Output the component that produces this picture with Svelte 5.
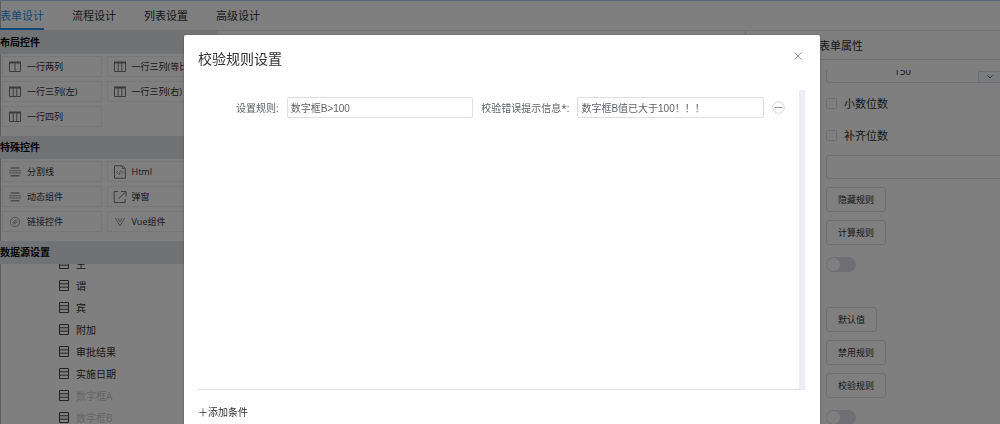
<script lang="ts">
	type Control = { icon: string; label: string };

	const tabs = ['表单设计', '流程设计', '列表设置', '高级设计'];
	let activeTab = $state('表单设计');

	// Левая панель с контролами
	const groups: { title: string; items: Control[] }[] = [
		{
			title: '布局控件',
			items: [
				{ icon: 'col2', label: '一行两列' },
				{ icon: 'col3', label: '一行三列(等比)' },
				{ icon: 'col3', label: '一行三列(左)' },
				{ icon: 'col3', label: '一行三列(右)' },
				{ icon: 'col3', label: '一行四列' }
			]
		},
		{
			title: '特殊控件',
			items: [
				{ icon: 'line', label: '分割线' },
				{ icon: 'html', label: 'Html' },
				{ icon: 'line', label: '动态组件' },
				{ icon: 'popup', label: '弹窗' },
				{ icon: 'link', label: '链接控件' },
				{ icon: 'vue', label: 'Vue组件' }
			]
		}
	];

	const fields = [
		{ name: '主' },
		{ name: '谓' },
		{ name: '宾' },
		{ name: '附加' },
		{ name: '审批结果' },
		{ name: '实施日期' },
		{ name: '数字框A', used: true },
		{ name: '数字框B', used: true }
	];

	let width = $state('150');
	let extra = $state('');
	let isOpen = $state(true);
	let rules = $state([{ rule: '数字框B>100', message: '数字框B值已大于100！！！' }]);

	function addRule() {
		rules.push({ rule: '', message: '' });
	}

	function removeRule(index: number) {
		rules.splice(index, 1);
	}
</script>

{#snippet icon(name: string)}
	<svg class="icon" viewBox="0 0 14 14" fill="none" stroke="currentColor" aria-hidden="true">
		{#if name === 'col2' || name === 'col3'}
			<path d="M1.5 2.5h11v9h-11z" />
			<path d="M1 2.5h12" stroke-width="2" />
			{#if name === 'col2'}
				<path d="M7 3v8" />
			{:else}
				<path d="M5.2 3v8M8.8 3v8" />
			{/if}
		{:else if name === 'line'}
			<g stroke="#999">
				<path d="M2.5 3h9M2.5 10.8h9" stroke-width="1.6" />
				<path d="M1 5.8h12M1 8h12" />
			</g>
		{:else if name === 'html'}
			<path d="M1.5.8h8L12.3 3.3v9.9H1.5z" />
			<path d="M9.3 1v2.6h3M5.3 5.8 3.7 7.5l1.6 1.7M8.5 5.8l1.6 1.7-1.6 1.7M7.5 5.3l-1.2 4.4" stroke-width=".8" />
		{:else if name === 'popup'}
			<path d="M5 1.5H1.2v11h11V9M8 1.5h5v4.7M12.8 1.7 5.5 8.8" />
		{:else if name === 'link'}
			<g stroke="#999">
				<circle cx="7" cy="7" r="4.7" stroke-width=".9" />
				<path d="m5 9.2 4-4.4M4.7 7.5 7 5.2l1.3-.3M9.3 6.5 7 8.8l-1.3.3" stroke-width=".9" />
			</g>
		{:else if name === 'vue'}
			<path d="M2.3 3 7 11l4.7-8M4.8 3 7 6.8 9.2 3" stroke="#999" />
		{/if}
	</svg>
{/snippet}

<div class="designer">
	<nav class="tabs">
		{#each tabs as tab}
			<button type="button" class="tab" class:active={tab === activeTab} onclick={() => (activeTab = tab)}>
				{tab}
			</button>
		{/each}
	</nav>

	<div class="workspace">
		<aside class="sidebar">
			{#each groups as group}
				<h2 class="group_title">{group.title}</h2>
				<div class="controls">
					{#each group.items as item}
						<button type="button" class="control">
							{@render icon(item.icon)}
							<span>{item.label}</span>
						</button>
					{/each}
				</div>
			{/each}

			<h2 class="group_title">数据源设置</h2>
			<div class="fields_view">
				<ul class="fields">
					{#each fields as field}
						<li class="field" class:used={field.used}>
							<svg width="10" height="11" viewBox="0 0 10 11" fill="none" stroke="#484848" aria-hidden="true">
								<path d="M.5 .5h9v10h-9zM.5 3.8h9M.5 7.2h9" />
							</svg>
							<span>{field.name}</span>
						</li>
					{/each}
				</ul>
			</div>
		</aside>

		<main class="canvas"></main>

		<aside class="props">
			<h2 class="props_title">表单属性</h2>
			<div class="props_view">
				<div class="props_form">
					<div class="number">
						<input type="text" aria-label="宽度" bind:value={width} />
						<button type="button" class="number_btn" aria-label="减少">
							<svg width="8" height="6" viewBox="0 0 8 6" fill="none" stroke="#606266">
								<path d="m1.5 1.5 2.5 2.5 2.5-2.5" />
							</svg>
						</button>
					</div>
					<label class="check"><input type="checkbox" />小数位数</label>
					<label class="check"><input type="checkbox" />补齐位数</label>
					<input class="text" type="text" aria-label="单位" bind:value={extra} />
					<button type="button" class="btn">隐藏规则</button>
					<button type="button" class="btn">计算规则</button>
					<input class="switch" type="checkbox" role="switch" aria-checked="false" aria-label="只读" />
					<button type="button" class="btn btn_first">默认值</button>
					<button type="button" class="btn">禁用规则</button>
					<button type="button" class="btn" onclick={() => (isOpen = true)}>校验规则</button>
					<input class="switch" type="checkbox" role="switch" aria-checked="false" aria-label="必填" />
				</div>
			</div>
		</aside>
	</div>
</div>

{#if isOpen}
	<div class="modal_overlay">
		<div class="modal" role="dialog" aria-modal="true" aria-labelledby="modal_title">
			<header class="modal_header">
				<h1 id="modal_title">校验规则设置</h1>
				<button type="button" class="close_btn" aria-label="关闭" onclick={() => (isOpen = false)}>
					<svg width="10" height="10" viewBox="0 0 10 10" fill="none" stroke="#909399">
						<path d="m1.5 1.5 7 7M8.5 1.5l-7 7" />
					</svg>
				</button>
			</header>

			<div class="modal_body">
				{#each rules as item, i}
					<div class="rule">
						<label for="rule_{i}">设置规则:</label>
						<input id="rule_{i}" type="text" bind:value={item.rule} />
						<label for="message_{i}">校验错误提示信息*:</label>
						<input id="message_{i}" type="text" bind:value={item.message} />
						<button type="button" class="remove_btn" aria-label="删除" onclick={() => removeRule(i)}>
							<svg width="13" height="13" viewBox="0 0 13 13" fill="none">
								<circle cx="6.5" cy="6.5" r="5.8" stroke="#d4d4d4" />
								<path d="M2.5 6.5h8" stroke="#999" />
							</svg>
						</button>
					</div>
				{/each}
			</div>

			<footer class="modal_footer">
				<button type="button" class="add_btn" onclick={addRule}>＋添加条件</button>
			</footer>
		</div>
	</div>
{/if}

<style>
	:global(body) {
		background: #fff;
		color: #303133;
		font-family: 'Open Sans', 'Noto Sans CJK SC', sans-serif;
		font-size: 10px;
	}

	* {
		box-sizing: border-box;
	}

	h1,
	h2,
	ul {
		margin: 0;
		padding: 0;
	}

	button,
	input {
		margin: 0;
		padding: 0;
		border: none;
		background: none;
		color: inherit;
		font-family: inherit;
		font-size: 10px;
	}

	button {
		cursor: pointer;
	}

	.designer {
		display: flex;
		flex-direction: column;
		height: 100vh;
		overflow: hidden;
		border-top: 1px solid #b4d0f0;
		box-shadow: inset 1px 0 #bbb;
	}

	.tabs {
		display: flex;
		gap: 28px;
		height: 30px;
		flex-shrink: 0;
		border-bottom: 1px solid #e4e7ed;
	}

	.tab {
		height: 29px;
		font-size: 11px;
		border-bottom: 2px solid transparent;
	}

	.tab.active {
		color: #2a8ee8;
		border-color: #2a8ee8;
	}

	.workspace {
		display: flex;
		flex: 1;
		min-height: 0;
	}

	.sidebar {
		display: flex;
		flex-direction: column;
		width: 217px;
		flex-shrink: 0;
	}

	.group_title {
		height: 23px;
		line-height: 23px;
		flex-shrink: 0;
		background: #e0e4e8;
		color: #000;
		font-size: 10px;
		font-weight: 700;
	}

	.controls {
		display: grid;
		grid-template-columns: 1fr 1fr;
		gap: 4px 5px;
		padding: 2px 11px 9px 2px;
	}

	.control {
		display: flex;
		align-items: center;
		gap: 5px;
		height: 21px;
		padding-left: 5px;
		border: 1px solid #f0f0f0;
		font-size: 9px;
		white-space: nowrap;
		overflow: hidden;
	}

	.icon {
		width: 14px;
		height: 14px;
		flex-shrink: 0;
		color: #777;
	}

	.fields_view {
		flex: 1;
		min-height: 0;
		overflow: hidden;
	}

	.fields {
		margin-top: -12px;
		padding-left: 59px;
		list-style: none;
	}

	.field {
		display: flex;
		align-items: center;
		gap: 7px;
		height: 22px;
	}

	.field.used {
		color: #ccc;
	}

	.canvas {
		flex: 1;
		border-right: 1px solid #dcdfe6;
	}

	.props {
		display: flex;
		flex-direction: column;
		width: 254px;
		flex-shrink: 0;
	}

	.props_title {
		height: 29px;
		padding-left: 73px;
		border-bottom: 1px solid #dcdfe6;
		font-size: 11px;
		line-height: 29px;
		font-weight: 400;
	}

	.props_view {
		flex: 1;
		min-height: 0;
		margin-top: 10px;
		overflow: hidden;
	}

	.props_form {
		display: flex;
		flex-direction: column;
		align-items: flex-start;
		gap: 8px;
		margin-top: -11px;
		padding-left: 80px;
	}

	.number {
		display: flex;
		width: 100%;
		height: 24px;
		border: 1px solid #dcdfe6;
		border-right: none;
		border-radius: 3px 0 0 3px;
	}

	.number input {
		flex: 1;
		min-width: 0;
		text-align: center;
	}

	.number_btn {
		display: flex;
		align-items: center;
		justify-content: center;
		align-self: flex-end;
		width: 22px;
		height: 11px;
		border: 1px solid #dcdfe6;
		border-width: 1px 0 0 1px;
		background: #f5f7fa;
	}

	.check {
		display: flex;
		align-items: center;
		gap: 7px;
		height: 24px;
		font-size: 11px;
	}

	.check input {
		appearance: none;
		width: 11px;
		height: 11px;
		border: 1px solid #dcdfe6;
		border-radius: 1px;
	}

	.text {
		width: 100%;
		height: 24px;
		padding: 0 8px;
		border: 1px solid #dcdfe6;
		border-right: none;
		border-radius: 3px 0 0 3px;
	}

	.btn {
		height: 25px;
		padding: 0 11px;
		border: 1px solid #dcdfe6;
		border-radius: 3px;
		font-size: 9px;
	}

	.btn_first {
		margin-top: 27px;
	}

	.switch {
		appearance: none;
		width: 30px;
		height: 15px;
		margin-top: 4px;
		padding: 1px;
		border-radius: 8px;
		background: #dcdfe6;
	}

	.switch::before {
		content: '';
		display: block;
		width: 13px;
		height: 13px;
		border-radius: 50%;
		background: #fff;
	}

	.modal_overlay {
		position: fixed;
		inset: 0;
		overflow: hidden;
		background: rgba(0, 0, 0, 0.5);
	}

	.modal {
		width: 63.6%;
		margin: 35px 18% 0 auto;
		padding: 0 15px 0 14px;
		border-radius: 2px;
		background: #fff;
		box-shadow: 0 1px 3px rgba(0, 0, 0, 0.3);
		color: #606266;
	}

	.modal_header {
		display: flex;
		align-items: flex-start;
		justify-content: space-between;
		height: 55px;
		padding-top: 14px;
	}

	.modal_header h1 {
		color: #303133;
		font-size: 14px;
		line-height: 20px;
		font-weight: 400;
	}

	.close_btn {
		display: flex;
		padding: 2px;
	}

	.modal_body {
		height: 300px;
		padding-top: 7px;
		border-bottom: 1px solid #dcdfe6;
		border-right: 6px solid #ebeff5;
	}

	.rule {
		display: flex;
		align-items: center;
		gap: 8px;
		padding: 0 14px 0 38px;
	}

	.rule label {
		font-size: 10px;
		white-space: nowrap;
	}

	.rule input {
		flex: 1;
		min-width: 0;
		height: 21px;
		padding: 0 3px;
		border: 1px solid #dcdfe6;
		border-radius: 2px;
		font-family: 'Liberation Sans', 'Noto Sans CJK SC', sans-serif;
	}

	.remove_btn {
		display: flex;
	}

	.modal_footer {
		display: flex;
		align-items: center;
		height: 42px;
	}

	.add_btn {
		color: #303133;
	}
</style>
